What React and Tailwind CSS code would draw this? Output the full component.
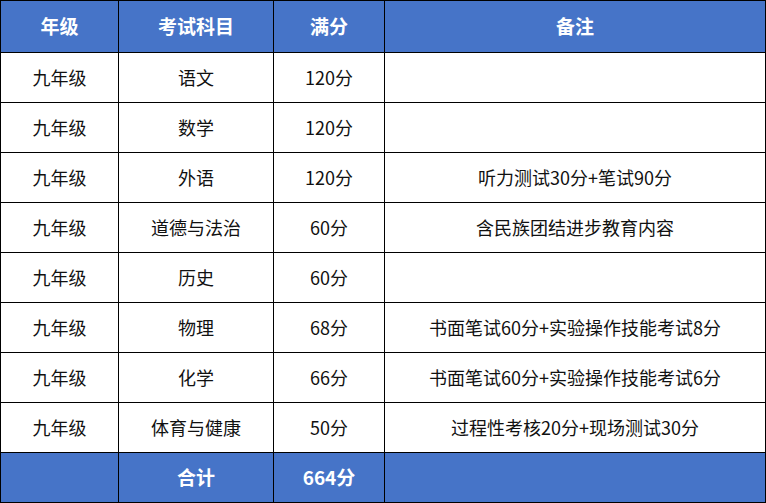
import React from 'react';

const rows = [
  ['九年级', '语文', '120分', ''],
  ['九年级', '数学', '120分', ''],
  ['九年级', '外语', '120分', '听力测试30分+笔试90分'],
  ['九年级', '道德与法治', '60分', '含民族团结进步教育内容'],
  ['九年级', '历史', '60分', ''],
  ['九年级', '物理', '68分', '书面笔试60分+实验操作技能考试8分'],
  ['九年级', '化学', '66分', '书面笔试60分+实验操作技能考试6分'],
  ['九年级', '体育与健康', '50分', '过程性考核20分+现场测试30分'],
];

const cell = 'flex items-center justify-center border-r border-b border-black';

function App() {
  return (
    <div
      className="w-[766px] h-[503px] bg-white"
      style={{ fontFamily: '"Noto Sans CJK SC", "Noto Sans", sans-serif' }}
    >
      <div className="grid grid-cols-[118px_155px_111px_381px] border-t border-l border-black">
        {/* header */}
        {['年级', '考试科目', '满分', '备注'].map((h) => (
          <div key={h} className={`${cell} h-[52px] bg-[#4674c8] text-white font-bold text-[19px]`}>
            {h}
          </div>
        ))}

        {/* body rows */}
        {rows.map((r, i) =>
          r.map((c, j) => (
            <div key={`${i}-${j}`} className={`${cell} h-[50px] text-[#111] text-[18px]`}>
              {c}
            </div>
          ))
        )}

        {/* total */}
        <div className={`${cell} h-[50px] bg-[#4674c8]`}></div>
        <div className={`${cell} h-[50px] bg-[#4674c8] text-white font-bold text-[19px]`}>合计</div>
        <div className={`${cell} h-[50px] bg-[#4674c8] text-white font-bold text-[19px]`}>664分</div>
        <div className={`${cell} h-[50px] bg-[#4674c8]`}></div>
      </div>
    </div>
  );
}

export default App;
